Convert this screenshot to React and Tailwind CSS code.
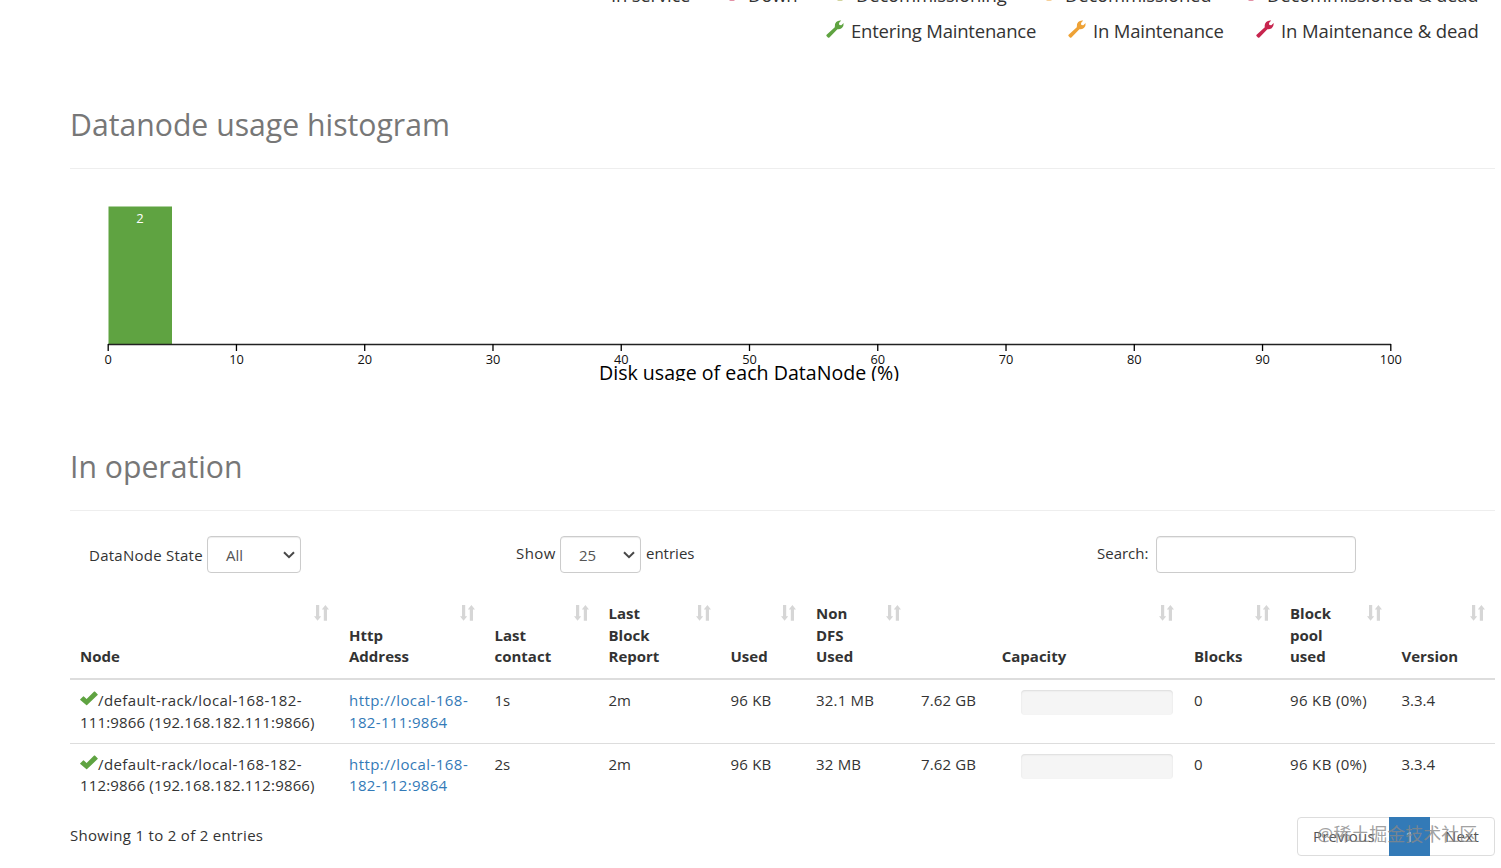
import React from "react";

const GREEN = "#5fa341";
const ORANGE = "#eea236";
const RED = "#c7254e";

const legendTop = [
  { label: "In service", icon: "check", color: GREEN, box: "w-[78px]", gap: "" },
  { label: "Down", icon: "power", color: RED, box: "w-[49px]", gap: "ml-[34px]" },
  { label: "Decommissioning", icon: "power", color: "#a5a83c", box: "w-[150px]", gap: "ml-[34px]" },
  { label: "Decommissioned", icon: "power", color: ORANGE, box: "w-[143px]", gap: "ml-[34px]" },
  { label: "Decommissioned & dead", icon: "power", color: RED, box: "w-[211px]", gap: "ml-[34px]" },
];

const legendBottom = [
  { label: "Entering Maintenance", icon: "wrench", color: GREEN, box: "w-[184px]", gap: "" },
  { label: "In Maintenance", icon: "wrench", color: ORANGE, box: "w-[130px]", gap: "ml-[33px]" },
  {
    label: "In Maintenance & dead",
    icon: "wrench",
    color: RED,
    box: "w-[197px] tracking-[-0.1px]",
    gap: "ml-[33px]",
  },
];

const ticks = [0, 10, 20, 30, 40, 50, 60, 70, 80, 90, 100];

const columns = [
  { title: ["Node"], width: "w-[269px]" },
  { title: ["Http", "Address"], width: "w-[145.5px]" },
  { title: ["Last", "contact"], width: "w-[114px]" },
  { title: ["Last", "Block", "Report"], width: "w-[122px]" },
  { title: ["Used"], width: "w-[85.5px]" },
  { title: ["Non", "DFS", "Used"], width: "w-[105px]" },
  { title: ["Capacity"], width: "w-[273px]", center: true },
  { title: ["Blocks"], width: "w-[96px]" },
  { title: ["Block", "pool", "used"], width: "w-[111.5px]" },
  { title: ["Version"], width: "w-[103.5px]" },
];

const nodes = [
  { id: "111", contact: "1s", report: "2m", used: "96 KB", nonDfs: "32.1 MB" },
  { id: "112", contact: "2s", report: "2m", used: "96 KB", nonDfs: "32 MB" },
];

const Wrench = ({ color }) => (
  <svg viewBox="0 0 18 18" className="-mt-[3px] w-[18px] h-[18px] shrink-0">
    <path
      d="M.5 16 Q0 15.300 .6 14.700L8.800 7.200Q8.200 3.900 10.200 1.900 12.300 0 15.200 .5L13 2.900 13.300 4.900 15.300 5.200 17.600 3Q18 5.900 15.900 7.900 13.800 9.700 11.400 9.300L3.400 17.400Q2.600 18 1.900 17.400Z"
      fill={color}
    />
  </svg>
);

const Check = ({ className = "mt-px" }) => (
  <svg viewBox="0 0 18 15" className={`inline-block w-[18px] h-[15px] ${className}`}>
    <path
      d="M.3 8.300 3.100 5.500Q3.500 5.100 3.900 5.500L6.600 8.100 14.100 .6Q14.500 .2 14.900 .6L17.600 3.300Q18 3.700 17.600 4.100L7.100 14.100Q6.600 14.500 6.200 14.100L.3 9.100Q-.1 8.700 .3 8.300Z"
      fill={GREEN}
    />
  </svg>
);

const Power = ({ color }) => (
  <svg viewBox="0 0 18 18" className="-mt-[5px] w-[18px] h-[18px] shrink-0" fill="none">
    <path
      d="M5 3.200A7.200 7.200 0 1 0 13 3.200M9 .5V8"
      stroke={color}
      strokeWidth="2.400"
    />
  </svg>
);

const LegendIcon = ({ icon, color }) => {
  if (icon === "wrench") return <Wrench color={color} />;
  if (icon === "power") return <Power color={color} />;
  return <Check className="-mt-[6px]" />;
};

const SortIcon = () => (
  <svg
    viewBox="0 0 15 16"
    className="absolute right-[10px] top-[13px] w-[15px] h-[16px]"
    fill="#d6d6d6"
  >
    <path d="M2 0H5.200V11.200H7.200L3.600 15.800 0 11.200H2Z" />
    <path d="M9.800 15.800H13V4.600H15L11.400 0 7.800 4.600H9.800Z" />
  </svg>
);

const Chevron = () => (
  <svg viewBox="0 0 12 8" className="w-[12px] h-[8px]" fill="none">
    <path d="M1 1.200 6 6.200 11 1.200" stroke="#484848" strokeWidth="2" />
  </svg>
);

const Legend = ({ items }) => (
  <div className="flex h-9 items-center justify-end pr-[23px] text-[18.5px] whitespace-nowrap tracking-[-0.2px]">
    {items.map((item) => (
      <div key={item.label} className={`flex items-center ${item.gap}`}>
        <LegendIcon icon={item.icon} color={item.color} />
        <span className={`ml-[7px] ${item.box}`}>{item.label}</span>
      </div>
    ))}
  </div>
);

const Histogram = () => (
  <svg width="1425" height="212" className="block overflow-hidden">
    <rect x="38.500" y="37.500" width="63.500" height="137.500" fill={GREEN} />
    <text x="70" y="54" textAnchor="middle" fontSize="13" fill="#fff">
      2
    </text>
    <path d="M38 175.500H1321" stroke="#222" strokeWidth="1.300" />
    {ticks.map((tick) => {
      const x = 38.2 + tick * 12.826;
      return (
        <g key={tick}>
          <line x1={x} x2={x} y1="175" y2="182" stroke="#000" strokeWidth="1.300" />
          <text x={x} y="195" textAnchor="middle" fontSize="12.800" fill="#111">
            {tick}
          </text>
        </g>
      );
    })}
    <text x="679" y="211" textAnchor="middle" fontSize="19.600" fill="#000">
      Disk usage of each DataNode (%)
    </text>
  </svg>
);

const SectionTitle = ({ children }) => (
  <h2 className="h-[73px] border-b border-[#eee] text-[30.200px] leading-[58px] text-[#777]">
    {children}
  </h2>
);

const SelectBox = ({ value, width }) => (
  <button
    className={`flex h-[37px] items-center justify-between rounded-[4px] border border-[#ccc] bg-white pl-[18px] pr-[5px] text-[#555] shadow-[inset_0_1px_1px_rgba(0,0,0,0.075)] ${width}`}
  >
    <span className="pt-[2px]">{value}</span>
    <Chevron />
  </button>
);

const Controls = () => (
  <div className="flex h-[37px] items-center pl-[19px]">
    <span className="w-[118px] pt-[2px] tracking-[0.25px]">DataNode State</span>
    <SelectBox value="All" width="w-[94px]" />
    <span className="ml-[215px] w-[44px] pb-[2px] tracking-[0.4px]">Show</span>
    <SelectBox value="25" width="w-[81px]" />
    <span className="ml-[5px] w-[49px] pb-[2px]">entries</span>
    <span className="ml-[402px] w-[59px] pb-[2px]">Search:</span>
    <input className="h-[37px] w-[200px] rounded-[4px] border border-[#ccc] px-3 shadow-[inset_0_1px_1px_rgba(0,0,0,0.075)]" />
  </div>
);

const NodeTable = () => (
  <table className="w-[1425px] table-fixed border-collapse text-left">
    <thead>
      <tr className="h-[87px] border-b-2 border-[#ddd]">
        {columns.map((col, i) => (
          <th
            key={i}
            className={`relative pb-[10px] pl-[10px] align-bottom font-bold ${col.width} ${
              col.center ? "pr-[37px] text-center" : ""
            }`}
          >
            <SortIcon />
            {col.title.map((line) => (
              <div key={line}>{line}</div>
            ))}
          </th>
        ))}
      </tr>
    </thead>
    <tbody>
      {nodes.map((node, i) => (
        <tr
          key={node.id}
          className={`h-[64px] align-top [&>td]:pl-[10px] [&>td]:pt-[10px] ${
            i > 0 ? "border-t border-[#ddd]" : ""
          }`}
        >
          <td className="whitespace-nowrap">
            <div className="flex h-[21.700px] tracking-[0.4px]">
              <Check />
              <span>/default-rack/local-168-182-</span>
            </div>
            <div className="tracking-[0.16px]">
              {node.id}:9866 (192.168.182.{node.id}:9866)
            </div>
          </td>
          <td className="whitespace-nowrap text-[#337ab7]">
            <div className="tracking-[0.45px]">http://local-168-</div>
            <div className="tracking-[0.33px]">182-{node.id}:9864</div>
          </td>
          <td>{node.contact}</td>
          <td>{node.report}</td>
          <td className="tracking-[0.2px]">{node.used}</td>
          <td className="tracking-[0.2px]">{node.nonDfs}</td>
          <td>
            <div className="flex">
              <span className="w-[100px] tracking-[0.15px]">7.62 GB</span>
              <div className="h-[25px] w-[152px] rounded-[4px] bg-[#f5f5f5] shadow-[inset_0_1px_2px_rgba(0,0,0,0.1)]" />
            </div>
          </td>
          <td>0</td>
          <td className="whitespace-nowrap tracking-[0.35px]">96 KB (0%)</td>
          <td>3.3.4</td>
        </tr>
      ))}
    </tbody>
  </table>
);

const Pagination = () => (
  <div className="relative flex h-[39px] w-[198px] items-center rounded-[4px] border border-[#ddd] text-[#555]">
    <span className="w-[91px] pl-[15px] tracking-[0.2px]">Previous</span>
    <span className="-my-px flex h-[39px] w-[41px] items-center justify-center bg-[#337ab7] text-white/60">
      1
    </span>
    <span className="pl-[15px] tracking-[0.3px]">Next</span>
    <span className="absolute left-[19px] top-[2px] whitespace-nowrap text-[18px] leading-[28px] text-[#888]/80">
      @稀土掘金技术社区
    </span>
  </div>
);

const App = () => {
  return (
    <div className="h-[868px] w-[1501px] overflow-hidden bg-white font-['Open_Sans','Noto_Sans_CJK_SC',sans-serif] text-[15px] leading-[21.700px] text-[#333]">
      <div className="-mt-[23px]">
        <Legend items={legendTop} />
        <Legend items={legendBottom} />
      </div>
      <div className="ml-[70px] w-[1425px]">
        <div className="pt-[47px]">
          <SectionTitle>Datanode usage histogram</SectionTitle>
          <Histogram />
        </div>
        <div className="pt-[57px]">
          <SectionTitle>In operation</SectionTitle>
        </div>
        <div className="pt-[25px]">
          <Controls />
        </div>
        <div className="pt-[19px]">
          <NodeTable />
        </div>
        <div className="flex justify-between pt-[10px]">
          <span className="pt-[8px] tracking-[0.3px]">Showing 1 to 2 of 2 entries</span>
          <Pagination />
        </div>
      </div>
    </div>
  );
};

export default App;
